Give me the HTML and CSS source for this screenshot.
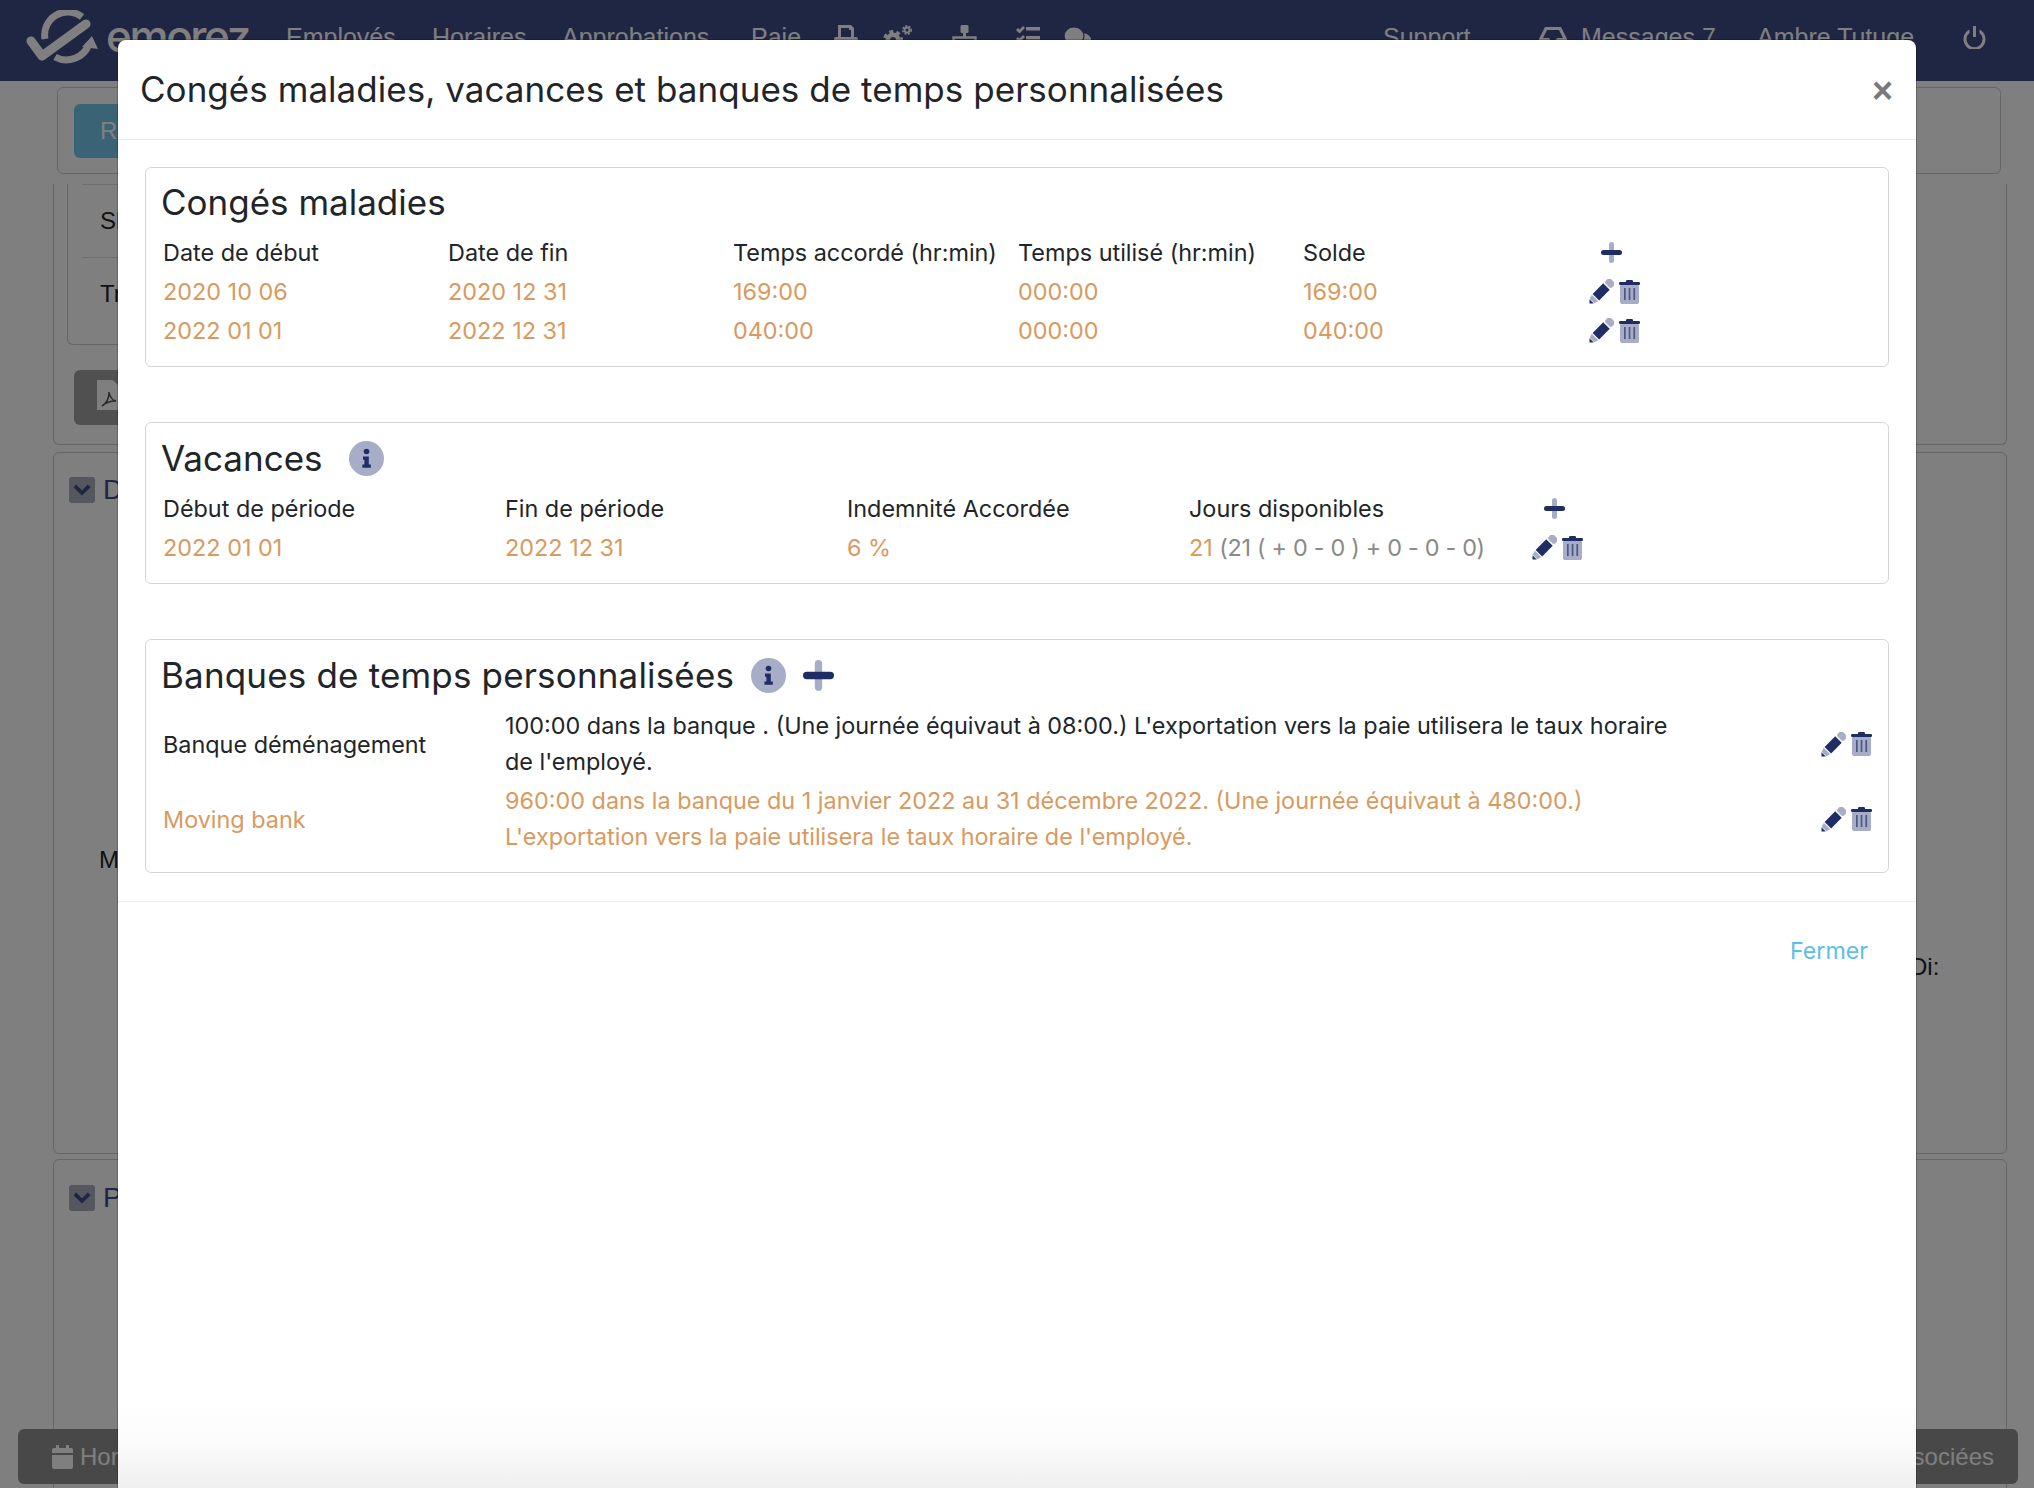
FILE: index.html
```html
<!DOCTYPE html>
<html lang="fr">
<head>
<meta charset="utf-8">
<title>Emorez</title>
<link rel="stylesheet" href="styles.css">
</head>
<body>
<svg class="defs" width="0" height="0" aria-hidden="true">
  <symbol id="i-plus" viewBox="0 0 21 21">
    <rect x="8" y="0" width="5" height="21" rx="2.5" fill="#a7adc6"/>
    <rect x="0" y="8" width="21" height="5" rx="2.5" fill="#1e2d64"/>
  </symbol>
  <symbol id="i-pen" viewBox="0 0 25 25">
    <g transform="translate(0.5 24.5) rotate(-45)">
      <rect x="25.500" y="-4.600" width="7" height="9.200" rx="2.200" fill="#a7adc6"/>
      <rect x="9" y="-4.600" width="15" height="9.200" fill="#1e2d64"/>
      <polygon points="3.500,-3.200 7.800,-4.600 7.800,4.600 3.500,3.200" fill="#a7adc6"/>
      <polygon points="0,0 3,-3 3,3" fill="#1e2d64"/>
    </g>
  </symbol>
  <symbol id="i-trash" viewBox="0 0 21 24">
    <rect x="1" y="4" width="19" height="20" rx="2.600" fill="#a7adc6"/>
    <rect x="0" y="2" width="21" height="3" rx="1.200" fill="#1e2d64"/>
    <rect x="7" y="0" width="7" height="3" rx="1.200" fill="#1e2d64"/>
    <rect x="5" y="8" width="1.700" height="12" fill="#4a5784"/>
    <rect x="9.700" y="8" width="1.700" height="12" fill="#4a5784"/>
    <rect x="14.400" y="8" width="1.700" height="12" fill="#4a5784"/>
  </symbol>
  <symbol id="i-info" viewBox="0 0 35 35">
    <circle cx="17.500" cy="17.500" r="17.500" fill="#a7adc6"/>
    <circle cx="17.500" cy="10.500" r="2.800" fill="#1e2d64"/>
    <path d="M14 15.500h5.800v8h2v3.200h-8.400v-3.200h2v-4.800h-1.400z" fill="#1e2d64"/>
  </symbol>
</svg>

<div class="page">
  <header class="nav">
    <svg class="logo" viewBox="0 0 76 56" aria-hidden="true">
      <path d="M21 29 A23 23 0 0 1 58 7" class="logo-stroke logo-thin"/>
      <path d="M31 47 A24 24 0 0 0 65 34" class="logo-stroke logo-thin"/>
      <polygon points="58,37 68,26 74,39" class="logo-fill"/>
      <path d="M7 31 L18 46 L62 14" class="logo-stroke logo-check"/>
    </svg>
    <span class="brand">emorez</span>
    <span class="nav-item nav-first">Employés</span>
    <span class="nav-item nav-horaires">Horaires</span>
    <span class="nav-item nav-appro">Approbations</span>
    <span class="nav-item nav-paie">Paie</span>
    <svg class="nav-icon nav-print" viewBox="0 0 24 24"><path d="M4 0h13l3 3v9h2a2 2 0 0 1 2 2v9H0v-9a2 2 0 0 1 2-2h2zM7 3v9h10V5h-2V3z"/></svg>
    <svg class="nav-icon nav-gears" viewBox="0 0 29 24"><circle cx="10" cy="15" r="7.500"/><circle cx="10" cy="15" r="8.500" class="nav-teeth"/><circle cx="10" cy="15" r="3" class="nav-hole"/><circle cx="24" cy="5" r="3.400"/><circle cx="24" cy="5" r="4.200" class="nav-teeth-sm"/><circle cx="24" cy="5" r="1.500" class="nav-hole"/></svg>
    <svg class="nav-icon nav-map" viewBox="0 0 25 24"><rect x="8.500" y="0" width="8" height="8" rx="1.500"/><rect x="11" y="8" width="3" height="5"/><path d="M1.500 22V12.500H23.500V22" class="nav-line"/></svg>
    <svg class="nav-icon nav-tasks" viewBox="0 0 24 24"><path d="M0 5l2-2 1.500 1.500L7 1l2 2-5.500 5.500zM0 14l2-2 1.500 1.500L7 10l2 2-5.500 5.500zM10 2h14v3.500H10zM10 11h14v3.500H10zM10 20h14v3H10z"/></svg>
    <svg class="nav-icon nav-chat" viewBox="0 0 27 24"><ellipse cx="20" cy="15" rx="7" ry="6.500"/><ellipse cx="10" cy="11" rx="10" ry="9" class="nav-chat-main"/></svg>
    <span class="nav-item nav-support">Support</span>
    <svg class="nav-icon nav-inbox" viewBox="0 0 28 24"><path d="M6 2h16l6 12v8H0v-8zM8 5L4 13h6l2 3h4l2-3h6L20 5z"/></svg>
    <span class="nav-item nav-msg">Messages 7</span>
    <span class="nav-item nav-user">Ambre Tutuge</span>
    <svg class="nav-icon nav-power" viewBox="0 0 24 24"><path d="M10.500 1h3v11h-3z"/><path d="M7 4.500v3.500a8 8 0 1 0 10 0V4.500a11 11 0 1 1-10 0z"/></svg>
  </header>

  <main class="main">
    <section class="bg-panel bg-top">
      <span class="bg-btn bg-btn-info">Re</span>
    </section>
    <section class="bg-panel bg-open bg-first">
      <div class="bg-inner">
        <div class="bg-row">Sl</div>
        <div class="bg-row">Tr</div>
      </div>
      <span class="bg-btn bg-btn-pdf">
        <svg class="bg-pdf" viewBox="0 0 24 30"><path d="M0 0h16l8 8v22H0z" fill="#fff"/><path d="M5 26c5-3 7-9 7-14 1 6 3 8 7 9-6 0-10 1-14 5z" fill="none" stroke="#555" stroke-width="1.500"/></svg>
      </span>
    </section>
    <section class="bg-panel bg-second">
      <div class="bg-head"><span class="bg-chev"><svg viewBox="0 0 14 10"><path d="M2 2l5 5 5-5"/></svg></span>D</div>
      <div class="bg-m">M</div>
      <div class="bg-di">Di:</div>
    </section>
    <section class="bg-panel bg-third">
      <div class="bg-head"><span class="bg-chev"><svg viewBox="0 0 14 10"><path d="M2 2l5 5 5-5"/></svg></span>P</div>
    </section>
  </main>

  <div class="bottom-bar">
    <span class="bottom-left"><svg class="bottom-cal" viewBox="0 0 21 24"><path d="M4 0h3v3h7V0h3v3h2a2 2 0 0 1 2 2v3H0V5a2 2 0 0 1 2-2h2zM0 10h21v12a2 2 0 0 1-2 2H2a2 2 0 0 1-2-2z"/></svg>Horaires</span>
    <span class="bottom-right">Compagnies associées</span>
  </div>
</div>

<div class="overlay">
  <div class="modal">
    <div class="modal-header">
      <h4 class="modal-title">Congés maladies, vacances et banques de temps personnalisées</h4>
      <span class="close">×</span>
    </div>
    <div class="modal-body">
      <section class="card">
        <h5 class="card-title">Congés maladies</h5>
        <div class="rows rows-six">
          <div class="row head">
            <span>Date de début</span><span>Date de fin</span><span>Temps accordé (hr:min)</span><span>Temps utilisé (hr:min)</span><span>Solde</span>
            <span class="plus-cell"><svg class="ic-plus"><use href="#i-plus"/></svg></span>
          </div>
          <div class="row accent">
            <span>2020 10 06</span><span>2020 12 31</span><span>169:00</span><span>000:00</span><span>169:00</span>
            <span class="actions"><svg class="ic-pen"><use href="#i-pen"/></svg><svg class="ic-trash"><use href="#i-trash"/></svg></span>
          </div>
          <div class="row accent">
            <span>2022 01 01</span><span>2022 12 31</span><span>040:00</span><span>000:00</span><span>040:00</span>
            <span class="actions"><svg class="ic-pen"><use href="#i-pen"/></svg><svg class="ic-trash"><use href="#i-trash"/></svg></span>
          </div>
        </div>
      </section>

      <section class="card card-vac">
        <h5 class="card-title">Vacances<svg class="ic-info ic-info-wide"><use href="#i-info"/></svg></h5>
        <div class="rows rows-five">
          <div class="row head">
            <span>Début de période</span><span>Fin de période</span><span>Indemnité Accordée</span><span>Jours disponibles</span>
            <span class="plus-cell"><svg class="ic-plus"><use href="#i-plus"/></svg></span>
          </div>
          <div class="row accent">
            <span>2022 01 01</span><span>2022 12 31</span><span>6 %</span><span>21 <span class="muted">(21 ( + 0 - 0 ) + 0 - 0 - 0)</span></span>
            <span class="actions"><svg class="ic-pen"><use href="#i-pen"/></svg><svg class="ic-trash"><use href="#i-trash"/></svg></span>
          </div>
        </div>
      </section>

      <section class="card card-bank">
        <h5 class="card-title card-title-bank">Banques de temps personnalisées<svg class="ic-info"><use href="#i-info"/></svg><svg class="ic-plus-lg"><use href="#i-plus"/></svg></h5>
        <div class="rows rows-bank">
          <div class="bank bank-first">
            <span>Banque déménagement</span>
            <span class="bank-text">100:00 dans la banque . (Une journée équivaut à 08:00.) L'exportation vers la paie utilisera le taux horaire de l'employé.</span>
            <span class="actions"><svg class="ic-pen"><use href="#i-pen"/></svg><svg class="ic-trash"><use href="#i-trash"/></svg></span>
          </div>
          <div class="bank accent">
            <span>Moving bank</span>
            <span class="bank-text">960:00 dans la banque du 1 janvier 2022 au 31 décembre 2022. (Une journée équivaut à 480:00.) L'exportation vers la paie utilisera le taux horaire de l'employé.</span>
            <span class="actions"><svg class="ic-pen"><use href="#i-pen"/></svg><svg class="ic-trash"><use href="#i-trash"/></svg></span>
          </div>
        </div>
      </section>
    </div>
    <div class="modal-footer">
      <span class="close-link">Fermer</span>
    </div>
  </div>
</div>
</body>
</html>
```
FILE: styles.css
```css
* { box-sizing: border-box; }
html, body { margin: 0; padding: 0; }
body {
  width: 2034px;
  height: 1488px;
  overflow: hidden;
  position: relative;
  background: #fff;
  font-family: Inter, "Noto Sans", sans-serif;
  color: #212529;
}
.defs { position: absolute; }
svg { display: block; }

/* background page */
.page { height: 1488px; overflow: hidden; font-family: "Liberation Sans", Arial, sans-serif; }
.nav {
  height: 81px;
  background: #3c4c86;
  display: flex;
  align-items: flex-start;
  color: #fff;
  padding-left: 24px;
}
.logo { width: 76px; height: 56px; margin-top: 10px; flex: none; }
.logo-stroke { fill: none; stroke: #fff; stroke-linejoin: round; }
.logo-check { stroke-width: 9; stroke-linecap: round; }
.logo-thin { stroke-width: 7; stroke-linecap: butt; }
.logo-fill { fill: #fff; }
.brand { font-family: Inter, sans-serif; font-size: 44px; font-weight: 500; line-height: 56px; margin: 8px 0 0 6px; letter-spacing: -2.400px; width: 180px; flex: none; }
.nav-item { font-size: 25px; line-height: 28px; margin-top: 23px; flex: none; }
.nav-icon { fill: #fff; height: 24px; flex: none; margin-top: 25px; }
.nav-hole { fill: #3c4c86; }
.nav-teeth { fill: none; stroke: #fff; stroke-width: 3; stroke-dasharray: 4 3.200; }
.nav-teeth-sm { fill: none; stroke: #fff; stroke-width: 1.600; stroke-dasharray: 2 1.500; }
.nav-line { fill: none; stroke: #fff; stroke-width: 2.400; }
.nav-chat-main { stroke: #3c4c86; stroke-width: 1.200; }
.nav-first { width: 146px; }
.nav-horaires { width: 130px; }
.nav-appro { width: 189px; }
.nav-paie { width: 83px; }
.nav-print { width: 24px; margin-right: 25px; }
.nav-gears { width: 29px; margin-right: 40px; }
.nav-map { width: 25px; margin-right: 39px; }
.nav-tasks { width: 24px; margin-right: 24px; }
.nav-chat { width: 27px; margin-right: 292px; }
.nav-support { width: 156px; }
.nav-inbox { width: 28px; margin-right: 14px; }
.nav-msg { width: 176px; }
.nav-user { width: 205px; }
.nav-power { width: 25px; height: 24px; }

.main { padding: 6px 27px 0 53px; display: flex; flex-direction: column; }
.bg-panel { border: 1px solid #ccc; border-radius: 6px; }
.bg-top { height: 87px; margin: 0 6px 10px 4px; padding: 16px; }
.bg-btn { display: block; border-radius: 6px; font-size: 24px; color: #fff; }
.bg-btn-info { width: 200px; height: 54px; line-height: 54px; padding-left: 26px; background: #74c8ec; }
.bg-open { height: 261px; border-top: 0; border-radius: 0 0 6px 6px; padding: 0 13px; margin-bottom: 7px; }
.bg-inner { width: 1700px; height: 161px; border: 1px solid #ccc; border-top: 0; border-radius: 0 0 6px 6px; padding: 0 14px; }
.bg-row { height: 73px; border-top: 1px solid #ddd; font-size: 24px; line-height: 72px; padding-left: 18px; color: #212529; }
.bg-btn-pdf { width: 180px; height: 55px; margin: 25px 0 0 7px; background: #a0a0a0; padding: 10px 0 0 23px; }
.bg-pdf { width: 24px; height: 30px; }
.bg-second { height: 702px; margin-bottom: 5px; padding: 24px 15px; }
.bg-third { height: 400px; padding: 25px 15px; }
.bg-head { display: flex; align-items: center; gap: 8px; font-size: 28px; line-height: 26px; color: #3c4c86; }
.bg-chev { width: 26px; height: 26px; border-radius: 3px; background: #a9aeba; padding: 6px 3px; }
.bg-chev path { fill: none; stroke: #3c4c86; stroke-width: 2.600; }
.bg-m { font-size: 24px; margin: 343px 0 0 30px; line-height: 28px; }
.bg-di { font-size: 24px; line-height: 28px; margin: 79px 0 0 1841px; width: 60px; }

.bottom-bar {
  position: absolute;
  left: 18px;
  top: 1429px;
  width: 2000px;
  height: 55px;
  border-radius: 6px;
  background: #909090;
  color: #fff;
  display: flex;
  justify-content: space-between;
  align-items: center;
  font-size: 24px;
  padding: 0 24px 0 34px;
}
.bottom-left { display: flex; align-items: center; gap: 7px; }
.bottom-cal { width: 21px; height: 24px; fill: #fff; }

/* modal */
.overlay {
  position: absolute;
  inset: 0;
  background: rgba(0, 0, 0, 0.5);
  padding-top: 40px;
}
.modal {
  width: 1798px;
  height: 1448px;
  margin-left: 118px;
  background: linear-gradient(to bottom, #fff 0, #fff 94%, #fbfbfb 97%, #efefef 100%);
  border-radius: 8px 8px 0 0;
  box-shadow: 0 0 0 1px rgba(0, 0, 0, 0.2);
  display: flex;
  flex-direction: column;
}
.modal-header {
  height: 100px;
  flex: none;
  border-bottom: 1px solid #e9ecef;
  display: flex;
  align-items: center;
  justify-content: space-between;
  padding: 0 23px 2px 22px;
}
.modal-title { margin: 0; font-size: 35px; font-weight: 400; line-height: 40px; letter-spacing: 0.04px; color: #212529; }
.close { font-size: 36px; font-weight: 700; line-height: 36px; margin-top: 4px; color: #7a7a7a; font-family: "Liberation Sans", sans-serif; }
.modal-body { padding: 27px 27px 28px; display: flex; flex-direction: column; gap: 55px; flex: none; }
.card { border: 1px solid #d5d5d5; border-radius: 6px; padding: 14px 15px 16px; }
.card-vac { padding-top: 15px; }
.card-bank { padding-top: 15px; padding-bottom: 15px; }
.card-title { margin: 0 0 11px; font-size: 35px; font-weight: 400; line-height: 40px; display: flex; align-items: center; color: #212529; }
.card-title-bank { letter-spacing: 0.17px; margin-bottom: 12px; }
.row { display: grid; align-items: center; height: 39px; font-size: 23.400px; margin-left: 2px; }
.rows-six .row { grid-template-columns: repeat(5, 285px) 1fr; }
.rows-five .row { grid-template-columns: repeat(4, 342px) 1fr; }
.accent { color: #d89a5f; }
.muted { color: #8a8a8a; letter-spacing: -0.3px; }
.plus-cell { padding-left: 13px; }
.actions { display: flex; align-items: center; gap: 5px; margin-left: 1px; }
.ic-plus { width: 21px; height: 21px; }
.ic-plus-lg { width: 31px; height: 31px; margin-left: 17px; }
.ic-pen { width: 25px; height: 25px; }
.ic-trash { width: 21px; height: 24px; }
.ic-info { width: 35px; height: 35px; margin-left: 17px; }
.ic-info-wide { margin-left: 26px; }
.bank { display: grid; grid-template-columns: 342px 1315px 1fr; align-items: center; margin-left: 2px; font-size: 23.400px; height: 76px; }
.bank-first { height: 74px; }
.bank-text { max-width: 1175px; line-height: 36.500px; }
.modal-footer { border-top: 1px solid #eceeef; padding: 35px 48px 0 0; display: flex; justify-content: flex-end; flex: none; }
.close-link { font-size: 23.200px; line-height: 28px; color: #5bc0e8; }
```
